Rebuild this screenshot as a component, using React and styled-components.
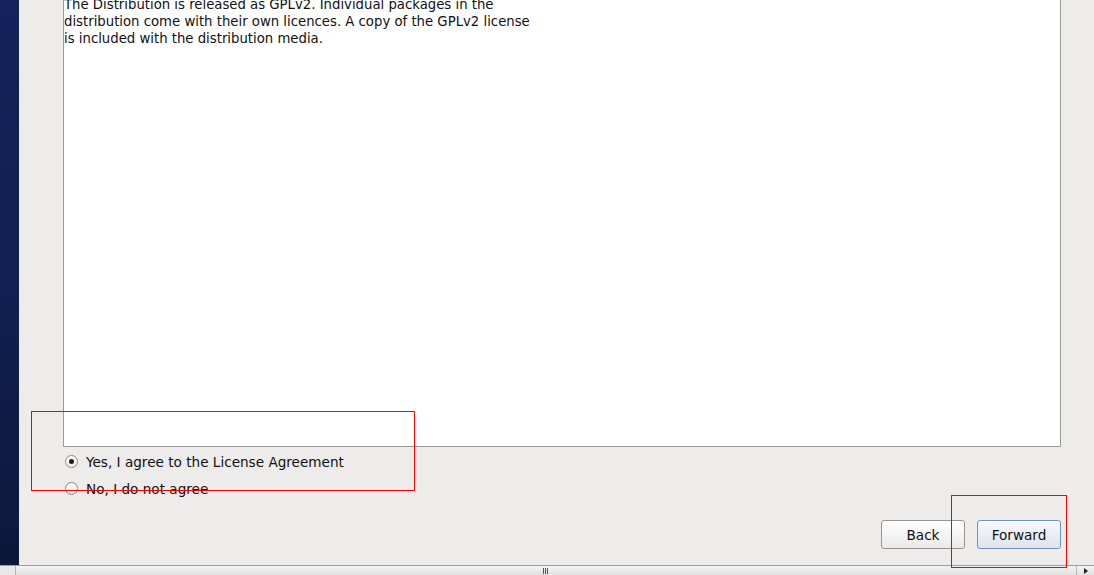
import React from "react";
import styled, { createGlobalStyle } from "styled-components";

const Global = createGlobalStyle`
  html, body { margin: 0; padding: 0; }
  body {
    width: 1094px;
    height: 575px;
    overflow: hidden;
    background: #edeceb;
    font-family: "DejaVu Sans", "Liberation Sans", sans-serif;
    font-size: 13.6px;
    color: #000;
  }
`;

const Screen = styled.div`
  position: relative;
  width: 1094px;
  height: 575px;
  display: flex;
  flex-direction: column;
  overflow: hidden;
`;

const Top = styled.div`
  flex: 1;
  display: flex;
  min-height: 0;
`;

const Sidebar = styled.div`
  width: 19px;
  flex: none;
  background: linear-gradient(to bottom, #13235b 0%, #112052 50%, #0c1839 100%);
`;

const Main = styled.div`
  flex: 1;
  display: flex;
  flex-direction: column;
  padding: 0 33px 0 44px;
  background: #edeceb;
`;

const LicenseBox = styled.div`
  height: 447px;
  flex: none;
  background: #ffffff;
  border: 1px solid #9b9a98;
  border-top: none;
  overflow: hidden;
  box-sizing: border-box;
`;

const LicenseText = styled.p`
  margin: -4px 0 0 0;
  white-space: nowrap;
  font-size: 13.25px;
  line-height: 17px;
  color: #101010;
`;

const Options = styled.div`
  display: flex;
  flex-direction: column;
  gap: 10px;
  margin-top: 6px;
  padding-left: 2px;
`;

const Option = styled.label`
  display: flex;
  align-items: center;
  gap: 8px;
  height: 17px;
  color: #101010;
`;

const Radio = styled.span`
  width: 11px;
  height: 11px;
  border-radius: 50%;
  border: 1px solid #8a8a8a;
  background: linear-gradient(to bottom, #ffffff, #e9e9e9);
  display: flex;
  align-items: center;
  justify-content: center;
  &::after {
    content: "";
    width: 5px;
    height: 5px;
    border-radius: 50%;
    background: #1e1e1e;
    display: ${(p) => (p.$checked ? "block" : "none")};
  }
`;

const ButtonRow = styled.div`
  display: flex;
  justify-content: flex-end;
  gap: 12px;
  margin-top: 23px;
`;

const Button = styled.button`
  width: 84px;
  height: 29px;
  border-radius: 3px;
  font-family: "DejaVu Sans", "Liberation Sans", sans-serif;
  font-size: 13.6px;
  color: #111;
  padding: 0;
  border: 1px solid ${(p) => (p.$primary ? "#7592bb" : "#979593")};
  background: ${(p) =>
    p.$primary
      ? "linear-gradient(to bottom, #f6f8fb, #dfe5ee)"
      : "linear-gradient(to bottom, #ffffff, #ebeaea)"};
  box-shadow: inset 0 1px 0 rgba(255,255,255,0.8);
`;

const Scrollbar = styled.div`
  height: 9px;
  flex: none;
  display: flex;
  border-top: 1px solid #9d9d9d;
  background: linear-gradient(to bottom, #f3f3f3, #e2e2e2);
`;

const ScrollCorner = styled.div`
  width: 15px;
  flex: none;
  border-right: 1px solid #b5b5b5;
  background: #e9e9e9;
`;

const ScrollTrack = styled.div`
  flex: 1;
  display: flex;
  justify-content: center;
  align-items: flex-start;
  border-right: 1px solid #b5b5b5;
  padding-right: 2px;
`;

const Grip = styled.div`
  display: flex;
  gap: 1px;
  margin-top: 2px;
  span {
    width: 1px;
    height: 6px;
    background: #555;
  }
`;

const ScrollEnd = styled.div`
  width: 17px;
  flex: none;
  display: flex;
  justify-content: center;
  align-items: flex-start;
  padding-top: 2px;
`;

const Arrow = styled.div`
  width: 0;
  height: 0;
  border-top: 3px solid transparent;
  border-bottom: 3px solid transparent;
  border-left: 4px solid #222;
`;

const Annotation = styled.div`
  position: absolute;
  border: 1px solid #ff0000;
  pointer-events: none;
`;

export default function App() {
  return (
    <>
      <Global />
      <Screen>
        <Top>
          <Sidebar />
          <Main>
            <LicenseBox>
              <LicenseText>
                The Distribution is released as GPLv2. Individual packages in the
                <br />
                distribution come with their own licences. A copy of the GPLv2 license
                <br />
                is included with the distribution media.
              </LicenseText>
            </LicenseBox>
            <Options>
              <Option>
                <Radio $checked />
                Yes, I agree to the License Agreement
              </Option>
              <Option>
                <Radio />
                No, I do not agree
              </Option>
            </Options>
            <ButtonRow>
              <Button>Back</Button>
              <Button $primary>Forward</Button>
            </ButtonRow>
          </Main>
        </Top>
        <Scrollbar>
          <ScrollCorner />
          <ScrollTrack>
            <Grip>
              <span />
              <span />
              <span />
            </Grip>
          </ScrollTrack>
          <ScrollEnd>
            <Arrow />
          </ScrollEnd>
        </Scrollbar>
        <Annotation style={{ left: 31, top: 411, width: 382, height: 78 }} />
        <Annotation style={{ left: 951, top: 495, width: 114, height: 71 }} />
      </Screen>
    </>
  );
}
